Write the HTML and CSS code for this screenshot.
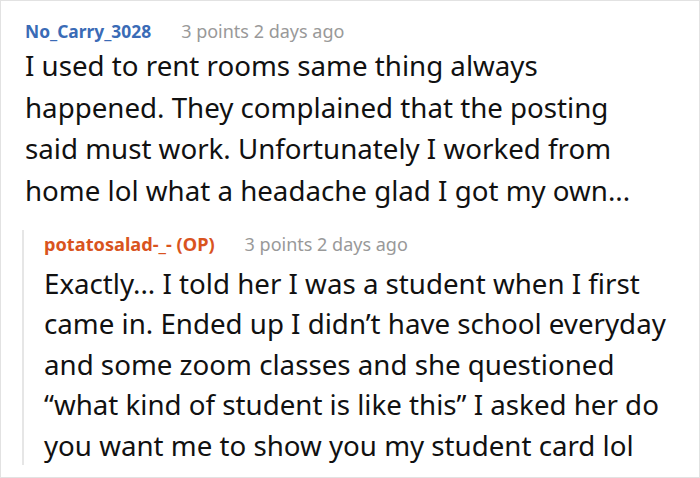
FILE: index.html
```html
<!DOCTYPE html>
<html>
<head>
<meta charset="utf-8">
<link rel="stylesheet" href="styles.css">
</head>
<body>
<div class="frame">
  <div class="comment">
    <div class="meta"><span class="user">No_Carry_3028</span><span class="info">3 points 2 days ago</span></div>
    <p class="text first">I used to rent rooms same thing always happened. They complained that the posting said must work. Unfortunately I worked from home lol what a headache glad I got my own...</p>
    <div class="reply">
      <div class="meta"><span class="user op">potatosalad-_- (OP)</span><span class="info">3 points 2 days ago</span></div>
      <p class="text">Exactly... I told her I was a student when I first came in. Ended up I didn’t have school everyday and some zoom classes and she questioned “what kind of student is like this” I asked her do you want me to show you my student card lol</p>
    </div>
  </div>
</div>
</body>
</html>
```

FILE: styles.css
```css
html, body {
  margin: 0;
  padding: 0;
  background: #fff;
}
.frame {
  box-sizing: border-box;
  width: 700px;
  height: 478px;
  border: 1px solid #e2e2e2;
  overflow: hidden;
  font-family: "Noto Sans", "Open Sans", sans-serif;
  color: #111;
}
.comment {
  padding: 16px 31px 0 24px;
}
.meta {
  display: flex;
  align-items: baseline;
  gap: 30px;
  font-size: 18px;
  line-height: 28px;
}
.user {
  font-weight: bold;
  font-size: 17.4px;
  color: #3a6bb6;
}
.user.op {
  font-size: 18.2px;
  color: #d9541e;
}
.info {
  color: #999;
}
.text {
  margin: 0;
  font-size: 27.7px;
  line-height: 40.5px;
}
.text.first {
  line-height: 41.7px;
}
.reply {
  margin: 31px 0 0 -3px;
  border-left: 2px solid #e6e6e6;
  padding-left: 20px;
}
.reply .meta {
  margin-top: -13px;
  margin-bottom: 5px;
}
.reply .text {
  margin-bottom: -6px;
}
```
